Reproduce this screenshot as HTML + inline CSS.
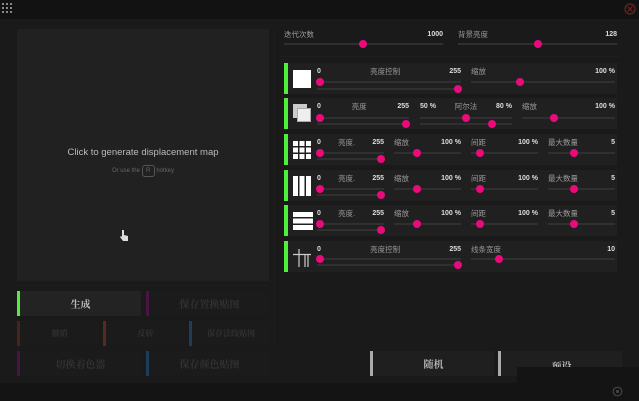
<!DOCTYPE html>
<html><head><meta charset="utf-8"><style>
*{margin:0;padding:0;box-sizing:border-box}
body{width:639px;height:401px;background:#1a1a1a;position:relative;overflow:hidden;font-family:"Liberation Sans","Noto Sans CJK SC",sans-serif;font-size:7px;color:#9a9a9a}
.a{position:absolute}
.row{position:absolute;left:284px;width:333px;height:31px;background:#202020;border-left:4px solid #4ef03c}
.t{position:absolute;height:2px;background:#303030}
.d{position:absolute;width:8px;height:8px;border-radius:50%;background:#ea0a7c}
.lb{position:absolute;display:flex;justify-content:space-between;font-size:7.5px;line-height:9px}
.lb b{color:#ddd;font-weight:bold;font-size:7px}
.btn{position:absolute;background:#1f1f1f;height:25px;border-left:3px solid;display:flex;align-items:center;justify-content:center;font-family:"Liberation Serif","Noto Serif CJK SC",serif;font-size:10px;color:#333;font-weight:bold}
</style></head><body>
<div class="a" style="left:0;top:0;width:639px;height:19px;background:#121212"></div>
<svg class="a" style="left:2px;top:3px" width="12" height="12"><g fill="#888"><rect x="0" y="0" width="2" height="2"/><rect x="4" y="0" width="2" height="2"/><rect x="8" y="0" width="2" height="2"/><rect x="0" y="4" width="2" height="2"/><rect x="4" y="4" width="2" height="2"/><rect x="8" y="4" width="2" height="2"/><rect x="0" y="8" width="2" height="2"/><rect x="4" y="8" width="2" height="2"/><rect x="8" y="8" width="2" height="2"/></g></svg>
<svg class="a" style="left:624px;top:3px" width="12" height="12"><circle cx="6" cy="6" r="5" fill="none" stroke="#6a2424" stroke-width="1.2"/><path d="M3.5 3.5L8.5 8.5M8.5 3.5L3.5 8.5" stroke="#6a2424" stroke-width="1.2"/></svg>

<div class="a" style="left:17px;top:29px;width:252px;height:252px;background:#212121"></div>
<div class="a" style="left:17px;top:147px;width:252px;text-align:center;font-size:9.5px;color:#bbb">Click to generate displacement map</div>
<div class="a" style="left:17px;top:165px;width:252px;text-align:center;font-size:6px;color:#666">Or use the <span style="display:inline-block;border:1px solid #555;border-radius:3px;width:13px;height:12px;line-height:10px">R</span> hotkey</div>
<svg class="a" style="left:119px;top:229px" width="10" height="13"><path d="M3 1v7l-1-1-1 1 3 4h5V7l-4-1V1z" fill="#ddd"/></svg>
<div class="a" style="left:17px;top:285px;width:252px;height:1px;background:#1f1f1f"></div>
<div class="a" style="left:274px;top:29px;width:1px;height:320px;background:#1e1e1e"></div>

<div class="lb" style="left:284px;top:30px;width:159px"><span>迭代次数</span><b>1000</b></div>
<div class="t" style="left:284px;top:43px;width:159px"></div><div class="d" style="left:359px;top:40px"></div>
<div class="lb" style="left:458px;top:30px;width:159px"><span>背景亮度</span><b>128</b></div>
<div class="t" style="left:458px;top:43px;width:159px"></div><div class="d" style="left:534px;top:40px"></div>
<div class="a" style="left:280px;top:56px;width:340px;height:1px;background:#1e1e1e"></div>

<div class="row" style="top:63px">
<div class="a" style="left:5px;top:7px;width:18px;height:18px;background:#fff"></div>
<div class="lb" style="left:29px;top:4px;width:144px"><b>0</b><span>亮度控制</span><b>255</b></div>
<div class="t" style="left:29px;top:18px;width:144px"></div><div class="d" style="left:28px;top:15px"></div>
<div class="t" style="left:29px;top:25px;width:144px"></div><div class="d" style="left:166px;top:22px"></div>
<div class="lb" style="left:183px;top:4px;width:144px"><span>缩放</span><b>100 %</b></div>
<div class="t" style="left:183px;top:18px;width:144px"></div><div class="d" style="left:228px;top:15px"></div>
</div>
<div class="row" style="top:98px">
<div class="a" style="left:5px;top:6px;width:14px;height:14px;background:#ccc"></div>
<div class="a" style="left:9px;top:10px;width:14px;height:14px;background:#eee;border:1px solid #aaa"></div>
<div class="lb" style="left:29px;top:4px;width:92px"><b>0</b><span>亮度</span><b>255</b></div>
<div class="t" style="left:29px;top:19px;width:92px"></div><div class="d" style="left:28px;top:16px"></div>
<div class="t" style="left:29px;top:25px;width:92px"></div><div class="d" style="left:114px;top:22px"></div>
<div class="lb" style="left:132px;top:4px;width:92px"><b>50 %</b><span>阿尔法</span><b>80 %</b></div>
<div class="t" style="left:132px;top:19px;width:92px"></div><div class="d" style="left:174px;top:16px"></div>
<div class="t" style="left:132px;top:25px;width:92px"></div><div class="d" style="left:200px;top:22px"></div>
<div class="lb" style="left:234px;top:4px;width:93px"><span>缩放</span><b>100 %</b></div>
<div class="t" style="left:234px;top:19px;width:93px"></div><div class="d" style="left:262px;top:16px"></div>
</div>

<div class="row" style="top:134px">
<svg class="a" style="left:5px;top:7px" width="18" height="18"><g fill="#fff"><rect x="0" y="0" width="5" height="5"/><rect x="6.5" y="0" width="5" height="5"/><rect x="13" y="0" width="5" height="5"/><rect x="0" y="6.5" width="5" height="5"/><rect x="6.5" y="6.5" width="5" height="5"/><rect x="13" y="6.5" width="5" height="5"/><rect x="0" y="13" width="5" height="5"/><rect x="6.5" y="13" width="5" height="5"/><rect x="13" y="13" width="5" height="5"/></g></svg>
<div class="lb" style="left:29px;top:4px;width:67px"><b>0</b><span>亮度.</span><b>255</b></div>
<div class="t" style="left:29px;top:18px;width:67px"></div><div class="d" style="left:28px;top:15px"></div>
<div class="t" style="left:29px;top:24px;width:67px"></div><div class="d" style="left:89px;top:21px"></div>
<div class="lb" style="left:106px;top:4px;width:67px"><span>缩放</span><b>100 %</b></div>
<div class="t" style="left:106px;top:18px;width:67px"></div><div class="d" style="left:125px;top:15px"></div>
<div class="lb" style="left:183px;top:4px;width:67px"><span>间距</span><b>100 %</b></div>
<div class="t" style="left:183px;top:18px;width:67px"></div><div class="d" style="left:188px;top:15px"></div>
<div class="lb" style="left:260px;top:4px;width:67px"><span>最大数量</span><b>5</b></div>
<div class="t" style="left:260px;top:18px;width:67px"></div><div class="d" style="left:282px;top:15px"></div>
</div>
<div class="row" style="top:170px">
<svg class="a" style="left:5px;top:6px" width="18" height="20"><g fill="#fff"><rect x="0" y="0" width="5" height="20"/><rect x="6.5" y="0" width="5" height="20"/><rect x="13" y="0" width="5" height="20"/></g></svg>
<div class="lb" style="left:29px;top:4px;width:67px"><b>0</b><span>亮度.</span><b>255</b></div>
<div class="t" style="left:29px;top:18px;width:67px"></div><div class="d" style="left:28px;top:15px"></div>
<div class="t" style="left:29px;top:24px;width:67px"></div><div class="d" style="left:89px;top:21px"></div>
<div class="lb" style="left:106px;top:4px;width:67px"><span>缩放</span><b>100 %</b></div>
<div class="t" style="left:106px;top:18px;width:67px"></div><div class="d" style="left:125px;top:15px"></div>
<div class="lb" style="left:183px;top:4px;width:67px"><span>间距</span><b>100 %</b></div>
<div class="t" style="left:183px;top:18px;width:67px"></div><div class="d" style="left:188px;top:15px"></div>
<div class="lb" style="left:260px;top:4px;width:67px"><span>最大数量</span><b>5</b></div>
<div class="t" style="left:260px;top:18px;width:67px"></div><div class="d" style="left:282px;top:15px"></div>
</div>
<div class="row" style="top:205px">
<svg class="a" style="left:5px;top:7px" width="20" height="18"><g fill="#fff"><rect x="0" y="0" width="20" height="5"/><rect x="0" y="6.5" width="20" height="5"/><rect x="0" y="13" width="20" height="5"/></g></svg>
<div class="lb" style="left:29px;top:4px;width:67px"><b>0</b><span>亮度.</span><b>255</b></div>
<div class="t" style="left:29px;top:18px;width:67px"></div><div class="d" style="left:28px;top:15px"></div>
<div class="t" style="left:29px;top:24px;width:67px"></div><div class="d" style="left:89px;top:21px"></div>
<div class="lb" style="left:106px;top:4px;width:67px"><span>缩放</span><b>100 %</b></div>
<div class="t" style="left:106px;top:18px;width:67px"></div><div class="d" style="left:125px;top:15px"></div>
<div class="lb" style="left:183px;top:4px;width:67px"><span>间距</span><b>100 %</b></div>
<div class="t" style="left:183px;top:18px;width:67px"></div><div class="d" style="left:188px;top:15px"></div>
<div class="lb" style="left:260px;top:4px;width:67px"><span>最大数量</span><b>5</b></div>
<div class="t" style="left:260px;top:18px;width:67px"></div><div class="d" style="left:282px;top:15px"></div>
</div>
<div class="row" style="top:241px">
<svg class="a" style="left:5px;top:6px" width="20" height="20"><path d="M0 7.5H18M6 2V20M12 7.5V20M15 7.5V20" stroke="#ccc" stroke-width="1.2" fill="none"/></svg>
<div class="lb" style="left:29px;top:4px;width:144px"><b>0</b><span>亮度控制</span><b>255</b></div>
<div class="t" style="left:29px;top:17px;width:144px"></div><div class="d" style="left:28px;top:14px"></div>
<div class="t" style="left:29px;top:23px;width:144px"></div><div class="d" style="left:166px;top:20px"></div>
<div class="lb" style="left:183px;top:4px;width:144px"><span>线条宽度</span><b>10</b></div>
<div class="t" style="left:183px;top:17px;width:144px"></div><div class="d" style="left:207px;top:14px"></div>
</div>

<div class="btn" style="left:17px;top:291px;width:124px;border-color:#4ef03c;color:#bbb;background:#232323">生成</div>
<div class="btn" style="left:146px;top:291px;width:124px;border-color:#4a1444;background:#1b1b1b">保存置换贴图</div>
<div class="btn" style="left:17px;top:321px;width:82px;border-color:#4a2218;background:#1b1b1b;font-size:8px">撤销</div>
<div class="btn" style="left:103px;top:321px;width:82px;border-color:#5a2a1e;background:#1b1b1b;font-size:8px">反转</div>
<div class="btn" style="left:189px;top:321px;width:81px;border-color:#1d3d5a;background:#1b1b1b;font-size:8px">保存法线贴图</div>
<div class="btn" style="left:17px;top:351px;width:124px;border-color:#4a1444;background:#1b1b1b">切换着色器</div>
<div class="btn" style="left:146px;top:351px;width:124px;border-color:#1d3d5a;background:#1b1b1b">保存颜色贴图</div>

<div class="a" style="left:0;top:383px;width:639px;height:18px;background:#141414"></div>
<div class="btn" style="left:370px;top:351px;width:124px;border-color:#aaa;color:#bbb">随机</div>
<div class="btn" style="left:498px;top:351px;width:124px;border-color:#aaa;color:#bbb;align-items:flex-start;padding-top:7px">预设</div>
<div class="a" style="left:517px;top:367px;width:122px;height:34px;background:#141414"></div>
<svg class="a" style="left:612px;top:386px" width="11" height="11"><circle cx="5.5" cy="5.5" r="4.3" fill="none" stroke="#444" stroke-width="1.2"/><circle cx="5.5" cy="5.5" r="1.6" fill="#444"/></svg>
</body></html>
